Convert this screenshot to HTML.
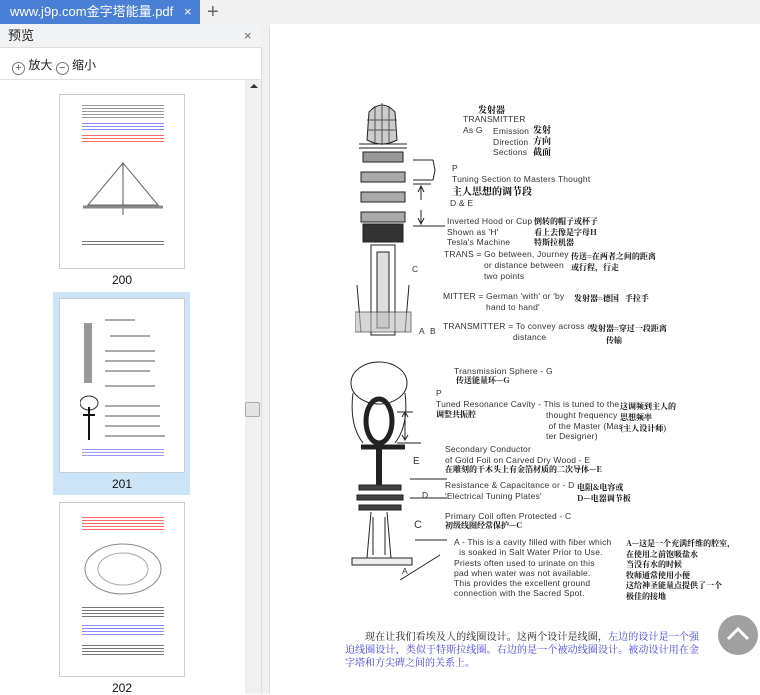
<!DOCTYPE html>
<html><head><meta charset="utf-8"><style>
*{margin:0;padding:0;box-sizing:border-box}
body{width:760px;height:694px;overflow:hidden;background:#fff;font-family:"Liberation Sans","Noto Sans CJK SC",sans-serif;position:relative}
.abs{position:absolute;white-space:nowrap}
.e{font-size:8.5px;color:#333;letter-spacing:.2px}
.c{font-family:"Noto Serif CJK SC","Noto Sans CJK SC",serif;font-size:8px;color:#111;font-weight:bold}
.thumb{position:absolute;left:59px;width:126px;height:175px;background:#fff;border:1px solid #ccc}
.lbl{position:absolute;left:59px;width:126px;text-align:center;font-size:12px;color:#111}
.tl{position:absolute;height:1px;background:#aaa}
</style></head><body>
<div class="abs" style="left:0;top:0;width:760px;height:24px;background:#f0f0f0"></div>
<div class="abs" style="left:0;top:0;width:200px;height:24px;background:#4a7fd6;color:#fff;font-size:13px;line-height:24px;padding-left:10px">www.j9p.com金字塔能量.pdf<span style="position:absolute;left:184px;font-size:13px">×</span></div>
<div class="abs" style="left:207px;top:0;font-size:20px;line-height:24px;color:#666">+</div>
<div class="abs" style="left:0;top:24px;width:262px;height:670px;background:#fff;border-right:1px solid #ddd"></div>
<div class="abs" style="left:0;top:24px;width:262px;height:24px;background:#f1f2f4;border-bottom:1px solid #ddd;font-size:13px;line-height:24px;padding-left:8px;color:#222">预览<span style="position:absolute;left:244px;color:#666">×</span></div>
<div class="abs" style="left:0;top:79px;width:262px;height:1px;background:#e2e2e2"></div>
<div class="abs" style="left:12px;top:56px;font-size:12px;color:#222"><span style="display:inline-block;width:13px;height:13px;border:1px solid #777;border-radius:50%;vertical-align:-2px;text-align:center;line-height:10px;font-size:11px;color:#555">+</span> 放大 <span style="display:inline-block;width:13px;height:13px;border:1px solid #777;border-radius:50%;vertical-align:-2px;text-align:center;line-height:10px;font-size:11px;color:#555">−</span> 缩小</div>
<div class="abs" style="left:245px;top:80px;width:16px;height:614px;background:#f0f0f0"></div>
<div class="abs" style="left:250px;top:84px;width:0;height:0;border-left:4px solid transparent;border-right:4px solid transparent;border-bottom:4px solid #333"></div>
<div class="abs" style="left:245px;top:402px;width:15px;height:15px;background:#e4e4e4;border:1px solid #aaa;border-radius:2px"></div>
<div class="abs" style="left:262px;top:24px;width:8px;height:670px;background:#f0f0f0"></div>
<div class="abs" style="left:269px;top:26px;width:1px;height:668px;background:#ddd"></div>
<div class="thumb" style="top:94px">
 <div class="tl" style="left:22px;top:10px;width:82px;height:14px;background:repeating-linear-gradient(#999 0 1px,#fff 1px 3px)"></div>
 <div class="tl" style="left:22px;top:28px;width:82px;height:8px;background:repeating-linear-gradient(#88f 0 1px,#fff 1px 3px)"></div>
 <div class="tl" style="left:22px;top:40px;width:82px;height:8px;background:repeating-linear-gradient(#f66 0 1px,#fff 1px 3px)"></div>
 <svg style="position:absolute;left:18px;top:60px" width="90" height="70"><polygon points="45,8 10,50 80,50" fill="none" stroke="#666"/><line x1="45" y1="8" x2="45" y2="60" stroke="#555"/><line x1="5" y1="52" x2="85" y2="52" stroke="#888" stroke-width="3"/></svg>
 <div class="tl" style="left:22px;top:146px;width:82px;height:6px;background:repeating-linear-gradient(#777 0 1px,#fff 1px 3px)"></div>
</div>
<div class="lbl" style="top:273px">200</div>
<div class="abs" style="left:53px;top:292px;width:137px;height:203px;background:#cce4f7"></div>
<div class="thumb" style="top:298px">
 <svg style="position:absolute;left:20px;top:16px" width="90" height="130"><rect x="4" y="8" width="8" height="60" fill="#999"/><ellipse cx="9" cy="88" rx="9" ry="7" fill="none" stroke="#333"/><path d="M9 92 L9 125 M3 100 L15 100" stroke="#111" stroke-width="2"/><g fill="#aaa"><rect x="25" y="4" width="30" height="2"/><rect x="30" y="20" width="40" height="2"/><rect x="25" y="35" width="50" height="2"/><rect x="25" y="45" width="50" height="2"/><rect x="25" y="55" width="45" height="2"/><rect x="25" y="70" width="50" height="2"/><rect x="25" y="90" width="55" height="2"/><rect x="25" y="100" width="55" height="2"/><rect x="25" y="110" width="55" height="2"/><rect x="25" y="120" width="60" height="2"/></g></svg>
 <div class="tl" style="left:22px;top:150px;width:82px;height:8px;background:repeating-linear-gradient(#99f 0 1px,#fff 1px 3px)"></div>
</div>
<div class="lbl" style="top:477px">201</div>
<div class="thumb" style="top:502px">
 <div class="tl" style="left:22px;top:14px;width:82px;height:14px;background:repeating-linear-gradient(#f66 0 1px,#fff 1px 3px)"></div>
 <svg style="position:absolute;left:20px;top:36px" width="86" height="60"><ellipse cx="43" cy="30" rx="38" ry="25" fill="none" stroke="#888"/><ellipse cx="43" cy="30" rx="25" ry="16" fill="none" stroke="#aaa"/></svg>
 <div class="tl" style="left:22px;top:104px;width:82px;height:12px;background:repeating-linear-gradient(#777 0 1px,#fff 1px 3px)"></div>
 <div class="tl" style="left:22px;top:122px;width:82px;height:12px;background:repeating-linear-gradient(#88f 0 1px,#fff 1px 3px)"></div>
 <div class="tl" style="left:22px;top:142px;width:82px;height:10px;background:repeating-linear-gradient(#777 0 1px,#fff 1px 3px)"></div>
</div>
<div class="lbl" style="top:681px">202</div>

<!-- upper column -->
<svg class="abs" style="left:355px;top:100px" width="90" height="240">
 <g stroke="#222" fill="none">
  <path d="M14 12 Q27 -2 40 12 L42 40 Q27 48 12 40Z" fill="#ccc"/>
  <g stroke="#555"><line x1="20" y1="6" x2="20" y2="42"/><line x1="27" y1="3" x2="27" y2="45"/><line x1="34" y1="6" x2="34" y2="42"/><line x1="12" y1="20" x2="42" y2="20"/><line x1="12" y1="30" x2="42" y2="30"/></g>
  <line x1="4" y1="44" x2="52" y2="44"/><line x1="4" y1="48" x2="52" y2="48"/>
  <rect x="8" y="52" width="40" height="10" fill="#999"/>
  <rect x="6" y="72" width="44" height="10" fill="#aaa"/>
  <rect x="6" y="92" width="44" height="10" fill="#aaa"/>
  <rect x="6" y="112" width="44" height="10" fill="#aaa"/>
  <rect x="8" y="124" width="40" height="18" fill="#333"/>
  <rect x="16" y="145" width="24" height="90"/>
  <rect x="22" y="152" width="12" height="76" fill="#ddd"/>
  <path d="M2 185 L6 232 M54 185 L50 232"/>
  <rect x="0" y="212" width="56" height="20" fill="#bbb" opacity=".6"/>
  <line x1="58" y1="60" x2="78" y2="60"/><path d="M78 60 L80 70 L78 80 M58 80 L78 80"/>
  <line x1="58" y1="84" x2="76" y2="84"/>
  <line x1="66" y1="86" x2="66" y2="100"/><path d="M63 92 L66 86 L69 92"/>
  <line x1="66" y1="110" x2="66" y2="124"/><path d="M63 118 L66 124 L69 118"/>
  <line x1="58" y1="126" x2="90" y2="126"/>
 </g>
</svg>
<svg class="abs" style="left:345px;top:355px" width="110" height="225">
 <g stroke="#222" fill="none">
  <ellipse cx="34" cy="28" rx="28" ry="21" fill="#fff"/>
  <path d="M8 38 Q4 70 18 88 M60 38 Q64 70 50 88"/>
  <ellipse cx="34" cy="66" rx="13" ry="22" stroke-width="5"/>
  <line x1="16" y1="92" x2="60" y2="92" stroke-width="5"/>
  <line x1="34" y1="88" x2="34" y2="130" stroke-width="6"/>
  <rect x="14" y="130" width="42" height="5" fill="#444"/>
  <rect x="12" y="140" width="46" height="5" fill="#444"/>
  <rect x="14" y="150" width="42" height="5" fill="#444"/>
  <path d="M26 157 L22 203 L46 203 L42 157"/><line x1="28" y1="162" x2="28" y2="200"/><line x1="40" y1="162" x2="40" y2="200"/>
  <rect x="7" y="203" width="60" height="7" fill="#eee"/>
  <line x1="60" y1="57" x2="60" y2="85"/><path d="M57 62 L60 57 L63 62 M57 80 L60 85 L63 80"/>
  <line x1="52" y1="57" x2="68" y2="57"/><line x1="52" y1="88" x2="76" y2="88"/>
  <line x1="65" y1="124" x2="102" y2="124"/><line x1="65" y1="143" x2="102" y2="143"/><line x1="70" y1="185" x2="102" y2="185"/>
  <path d="M55 225 L95 200"/>
 </g>
</svg>

<div class="abs c" style="left:478px;top:103px;font-size:9px">发射器</div>
<div class="abs e" style="left:463px;top:114px">TRANSMITTER</div>
<div class="abs e" style="left:463px;top:125px">As G</div>
<div class="abs e" style="left:493px;top:126px">Emission</div>
<div class="abs e" style="left:493px;top:137px">Direction</div>
<div class="abs e" style="left:493px;top:147px">Sections</div>
<div class="abs c" style="left:533px;top:124px;font-size:9px;line-height:11px">发射<br>方向<br>截面</div>
<div class="abs e" style="left:452px;top:163px">P</div>
<div class="abs e" style="left:452px;top:174px">Tuning Section to Masters Thought</div>
<div class="abs c" style="left:452px;top:183px;font-size:10px">主人思想的调节段</div>
<div class="abs e" style="left:450px;top:198px">D &amp; E</div>
<div class="abs e" style="left:447px;top:216px;line-height:10.5px">Inverted Hood or Cup<br>Shown as 'H'<br>Tesla's Machine</div>
<div class="abs c" style="left:534px;top:217px;line-height:10.5px">倒转的帽子或杯子<br>看上去像是字母H<br>特斯拉机器</div>
<div class="abs e" style="left:444px;top:249px">TRANS = Go between, Journey</div>
<div class="abs e" style="left:484px;top:260px;line-height:10.5px">or distance between<br>two points</div>
<div class="abs c" style="left:571px;top:251px;line-height:11px">传送=在两者之间的距离<br>或行程，行走</div>
<div class="abs e" style="left:412px;top:264px">C</div>
<div class="abs e" style="left:443px;top:291px">MITTER = German 'with' or 'by</div>
<div class="abs e" style="left:486px;top:302px">hand to hand'</div>
<div class="abs c" style="left:574px;top:293px">发射器=德国&nbsp;&nbsp;&nbsp;手拉手</div>
<div class="abs e" style="left:443px;top:321px">TRANSMITTER = To convey across a</div>
<div class="abs e" style="left:513px;top:332px">distance</div>
<div class="abs c" style="left:590px;top:323px;line-height:12px">发射器=穿过一段距离<br>&nbsp;&nbsp;&nbsp;&nbsp;&nbsp;&nbsp;&nbsp;&nbsp;传输</div>
<div class="abs e" style="left:419px;top:326px">A&nbsp;&nbsp;B</div>

<div class="abs e" style="left:454px;top:366px">Transmission Sphere - G</div>
<div class="abs c" style="left:456px;top:375px">传送能量环—G</div>
<div class="abs e" style="left:436px;top:388px">P</div>
<div class="abs e" style="left:436px;top:399px">Tuned Resonance Cavity - This is tuned to the</div>
<div class="abs c" style="left:436px;top:409px">调整共振腔</div>
<div class="abs e" style="left:546px;top:410px;line-height:10.5px">thought frequency<br>&nbsp;of the Master (Mas-<br>ter Designer)</div>
<div class="abs c" style="left:620px;top:401px;line-height:11px">这调频到主人的<br>思想频率<br>(主人设计师)</div>
<div class="abs e" style="left:413px;top:456px;font-size:10px">E</div>
<div class="abs e" style="left:445px;top:444px;line-height:10.5px">Secondary Conductor<br>of Gold Foil on Carved Dry Wood - E</div>
<div class="abs c" style="left:445px;top:464px">在雕刻的干木头上有金箔材质的二次导体—E</div>
<div class="abs e" style="left:422px;top:490px">D</div>
<div class="abs e" style="left:445px;top:480px;line-height:10.5px">Resistance &amp; Capacitance or - D<br>'Electrical Tuning Plates'</div>
<div class="abs c" style="left:577px;top:482px;line-height:11px">电阻&amp;电容或<br>D—电器调节板</div>
<div class="abs e" style="left:414px;top:519px;font-size:11px">C</div>
<div class="abs e" style="left:445px;top:511px">Primary Coil often Protected - C</div>
<div class="abs c" style="left:445px;top:520px">初级线圈经常保护—C</div>
<div class="abs e" style="left:454px;top:537px;line-height:10.3px">A - This is a cavity filled with fiber which<br>&nbsp;&nbsp;is soaked in Salt Water Prior to Use.<br>Priests often used to urinate on this<br>pad when water was not available.<br>This provides the excellent ground<br>connection with the Sacred Spot.</div>
<div class="abs c" style="left:626px;top:539px;line-height:10.5px">A—这是一个充满纤维的腔室，<br>在使用之前饱吸盐水<br>当没有水的时候<br>牧师通常使用小便<br>这给神圣能量点提供了一个<br>极佳的接地</div>
<div class="abs e" style="left:402px;top:566px">A</div>

<div class="abs" style="left:345px;top:629px;width:354px;white-space:normal;font-family:'Noto Serif CJK SC',serif;font-size:10px;line-height:13.2px;color:#222;text-indent:20px;text-align:justify">现在让我们看埃及人的线圈设计。这两个设计是线圈，<span style="color:#3d3df0">左边的设计是一个强迫线圈设计，类似于特斯拉线圈。右边的是一个被动线圈设计。被动设计用在金字塔和方尖碑之间的关系上。</span></div>

<div class="abs" style="left:718px;top:615px;width:40px;height:40px;border-radius:50%;background:#a0a0a0"></div>
<svg class="abs" style="left:718px;top:615px" width="40" height="40"><path d="M10 24 L20 14 L30 24" stroke="#fff" stroke-width="3" fill="none"/></svg>
</body></html>
